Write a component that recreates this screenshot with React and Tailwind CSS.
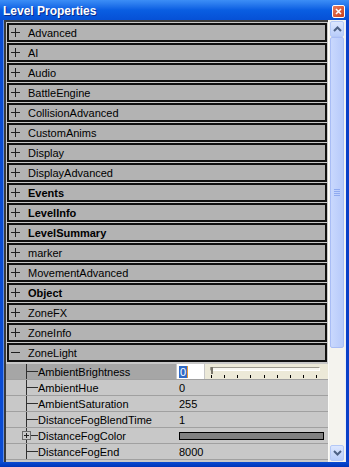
import React from 'react';

const categories = [
  { name: 'Advanced' },
  { name: 'AI' },
  { name: 'Audio' },
  { name: 'BattleEngine' },
  { name: 'CollisionAdvanced' },
  { name: 'CustomAnims' },
  { name: 'Display' },
  { name: 'DisplayAdvanced' },
  { name: 'Events', bold: true },
  { name: 'LevelInfo', bold: true },
  { name: 'LevelSummary', bold: true },
  { name: 'marker' },
  { name: 'MovementAdvanced' },
  { name: 'Object', bold: true },
  { name: 'ZoneFX' },
  { name: 'ZoneInfo' },
  { name: 'ZoneLight', open: true },
];

const props = [
  { name: 'AmbientBrightness', kind: 'slider', selected: true },
  { name: 'AmbientHue', value: '0' },
  { name: 'AmbientSaturation', value: '255' },
  { name: 'DistanceFogBlendTime', value: '1' },
  { name: 'DistanceFogColor', kind: 'color', expand: true },
  { name: 'DistanceFogEnd', value: '8000' },
];

function PlusMinus({ open }) {
  return (
    <svg width="9" height="9" viewBox="0 0 9 9" className="shrink-0">
      <rect x="0" y="4" width="9" height="1" fill="#202020" />
      {!open && <rect x="4" y="0" width="1" height="9" fill="#202020" />}
    </svg>
  );
}

function Arrow({ down }) {
  return (
    <svg width="9" height="6" viewBox="0 0 9 6">
      <path d={down ? 'M1 1 L4.5 4.5 L8 1' : 'M1 5 L4.5 1.5 L8 5'} fill="none" stroke="#4d6185" strokeWidth="2" />
    </svg>
  );
}

function Slider() {
  return (
    <div className="flex-1 h-full bg-[#ece9d8] flex flex-col px-[5px] pt-[3px]">
      <div className="relative h-[4px] mr-[3px] border border-[#9d9a8f] border-b-white border-r-white bg-[#f7f6f0]">
        <div className="absolute left-0 -top-[1px] w-[2px] h-[7px] bg-[#7a776c]" />
      </div>
      <div className="flex justify-between pl-[1px] pr-[6px] mt-[4px]">
        {Array.from({ length: 9 }).map((_, i) => (
          <div key={i} className="w-px h-[3px] bg-black" />
        ))}
      </div>
    </div>
  );
}

function PropRow({ p }) {
  return (
    <div className="flex h-[16px] border-b border-[#a0a0a0]">
      <div className={`relative w-[170px] flex items-stretch ${p.selected ? 'bg-[#a6a6a6]' : ''}`}>
        <div className="w-[20px]" />
        <div className="w-[12px] border-l border-[#303030] flex items-center">
          <div className="h-px w-full bg-[#303030]" />
        </div>
        <span className="leading-[16px] whitespace-nowrap">{p.name}</span>
        {p.expand && (
          <div className="absolute left-[16px] top-[3px] w-[9px] h-[9px] border border-[#6b6b6b] bg-[#c8c8c8] flex items-center justify-center">
            <svg width="5" height="5" viewBox="0 0 5 5">
              <rect x="0" y="2" width="5" height="1" fill="#202020" />
              <rect x="2" y="0" width="1" height="5" fill="#202020" />
            </svg>
          </div>
        )}
      </div>
      <div className="flex-1 flex items-stretch pl-[1px]">
        {p.kind === 'slider' ? (
          <>
            <div className="w-[27px] bg-white flex items-center pl-[2px]">
              <span className="bg-[#316ac5] text-white leading-[12px] px-px border-r border-[#e59a36]">0</span>
            </div>
            <div className="w-px" />
            <Slider />
          </>
        ) : p.kind === 'color' ? (
          <div className="flex-1 flex items-center pl-[2px] pr-[4px]">
            <div className="w-full h-[8px] bg-[#808080] border border-black" />
          </div>
        ) : (
          <span className="leading-[16px] pl-[2px]">{p.value}</span>
        )}
      </div>
    </div>
  );
}

export default function App() {
  return (
    <div className="w-[349px] h-[467px] flex flex-col bg-[#0b4ed6] text-[11px] text-black font-[family-name:Liberation_Sans,Arial,sans-serif] overflow-hidden">
      {/* Title bar */}
      <div className="h-[20px] shrink-0 flex items-center justify-between pl-[3px] pr-[4px] pt-[2px] bg-linear-to-b from-[#3c8ef6] via-[#0a5ee2] to-[#0650d6]">
        <span className="text-white font-bold text-[12px] leading-none [text-shadow:1px_1px_0_#0a2a8a]">Level Properties</span>
        <div className="w-[13px] h-[13px] rounded-[2px] border border-white bg-linear-to-br from-[#e87a5a] to-[#c8401c] flex items-center justify-center">
          <svg width="7" height="7" viewBox="0 0 7 7">
            <path d="M1 1 L6 6 M6 1 L1 6" stroke="white" strokeWidth="1.6" />
          </svg>
        </div>
      </div>

      <div className="flex flex-1 min-h-0">
        {/* left border */}
        <div className="w-[4px] flex">
          <div className="w-[3px] bg-[#0a4bd2]" />
          <div className="w-[1px] bg-[#5f8de6]" />
        </div>

        {/* Content */}
        <div className="w-[324px] flex flex-col border-t-2 border-l-2 border-[#3a3a3a] bg-[#c8c8c8] overflow-hidden">
          <div className="pt-[1px] px-[1px]">
            {categories.map((c) => (
              <div key={c.name} className="h-[19px] mb-[1px] border-2 border-[#111] bg-[#b3b3b3] flex items-center pl-[2px]">
                <PlusMinus open={c.open} />
                <span className={`ml-[8px] leading-none pt-[1px] ${c.bold ? 'font-bold' : ''}`}>{c.name}</span>
              </div>
            ))}
          </div>
          <div className="pt-[1px]">
            {props.map((p) => (
              <PropRow key={p.name} p={p} />
            ))}
          </div>
        </div>

        {/* Scrollbar */}
        <div className="w-[17px] flex flex-col bg-[#f4f3ee] pt-[1px] pb-[1px] border-l border-[#fbfbf8]">
          <div className="h-[16px] mx-[1px] rounded-[2px] border border-[#b4c8f6] bg-linear-to-b from-[#dde7fe] to-[#b9cdfa] flex items-center justify-center">
            <Arrow />
          </div>
          <div className="h-[311px] mx-[1px] rounded-[2px] border border-[#a9bdf5] bg-linear-to-r from-[#c9d8fd] to-[#b7cafa] flex flex-col items-center justify-center gap-[1px]">
            {[0, 1, 2, 3].map((i) => (
              <div key={i} className="w-[6px] h-px bg-[#8faaf0]" />
            ))}
          </div>
          <div className="flex-1" />
          <div className="h-[16px] mx-[1px] rounded-[2px] border border-[#b4c8f6] bg-linear-to-b from-[#dde7fe] to-[#b9cdfa] flex items-center justify-center">
            <Arrow down />
          </div>
        </div>

        {/* right border */}
        <div className="w-[4px] flex">
          <div className="w-[1px] bg-[#e9eef9]" />
          <div className="w-[3px] bg-[#0a3fc8]" />
        </div>
      </div>

      {/* bottom border */}
      <div className="h-[5px] shrink-0 bg-linear-to-b from-[#0a4bd2] to-[#0034b8]" />
    </div>
  );
}
